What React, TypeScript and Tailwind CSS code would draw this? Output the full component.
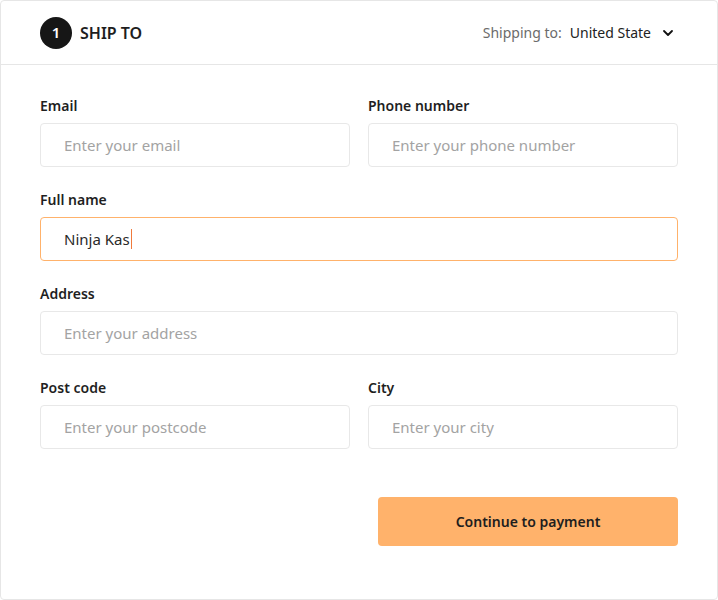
import { ChevronDown } from 'lucide-react';

const FONT = "font-['Noto_Sans','Lato',sans-serif]";

type FieldProps = {
  label: string;
  placeholder: string;
};

function Field({ label, placeholder }: FieldProps) {
  return (
    <label className="flex flex-col">
      <span className="mb-[7px] text-[14px] font-semibold leading-5 text-[#1f1f1f]">
        {label}
      </span>
      <input
        type="text"
        placeholder={placeholder}
        className="h-[44px] w-full rounded-[4px] border border-[#e8e8e8] bg-white px-[23px] text-[15px] text-[#2a2a2a] outline-none placeholder:text-[#a3a3a3]"
      />
    </label>
  );
}

export default function App() {
  return (
    <div className={`h-[600px] w-[718px] bg-white ${FONT}`}>
      <div className="flex h-full flex-col rounded-[4px] border border-[#e6e6e6]">
        <header className="flex h-[64px] shrink-0 items-center justify-between border-b border-[#e6e6e6] pl-[39px] pr-[41px]">
          <div className="flex items-center gap-[8px]">
            <span className="flex h-[32px] w-[32px] items-center justify-center rounded-full bg-[#161616] text-[15px] font-semibold text-white">
              1
            </span>
            <h2 className="text-[16px] font-semibold text-[#1e1e1e]">
              SHIP TO
            </h2>
          </div>
          <button type="button" className="flex items-center text-[14px]">
            <span className="text-[#6b6b6b]">Shipping to:</span>
            <span className="ml-[8px] text-[#222]">United State</span>
            <ChevronDown className="ml-[9px] h-[16px] w-[16px] text-[#111]" strokeWidth={2.75} />
          </button>
        </header>

        <form className="flex flex-col px-[39px] pt-[31px]">
          <div className="grid grid-cols-2 gap-x-[18px]">
            <Field label="Email" placeholder="Enter your email" />
            <Field label="Phone number" placeholder="Enter your phone number" />
          </div>

          <label className="mt-[23px] flex flex-col">
            <span className="mb-[7px] text-[14px] font-semibold leading-5 text-[#1f1f1f]">
              Full name
            </span>
            <div className="flex h-[44px] items-center rounded-[4px] border border-[#ffb26b] bg-white px-[23px] text-[15px] text-[#2a2a2a]">
              Ninja Kas
              <span className="ml-[1px] h-[20px] w-px bg-[#f07a3c]" />
            </div>
          </label>

          <div className="mt-[23px]">
            <Field label="Address" placeholder="Enter your address" />
          </div>

          <div className="mt-[23px] grid grid-cols-2 gap-x-[18px]">
            <Field label="Post code" placeholder="Enter your postcode" />
            <Field label="City" placeholder="Enter your city" />
          </div>

          <div className="mt-[48px] flex justify-end">
            <button
              type="button"
              className="h-[49px] w-[300px] rounded-[4px] bg-[#ffb26b] text-[14px] font-semibold text-[#1e1e1e]"
            >
              Continue to payment
            </button>
          </div>
        </form>
      </div>
    </div>
  );
}
